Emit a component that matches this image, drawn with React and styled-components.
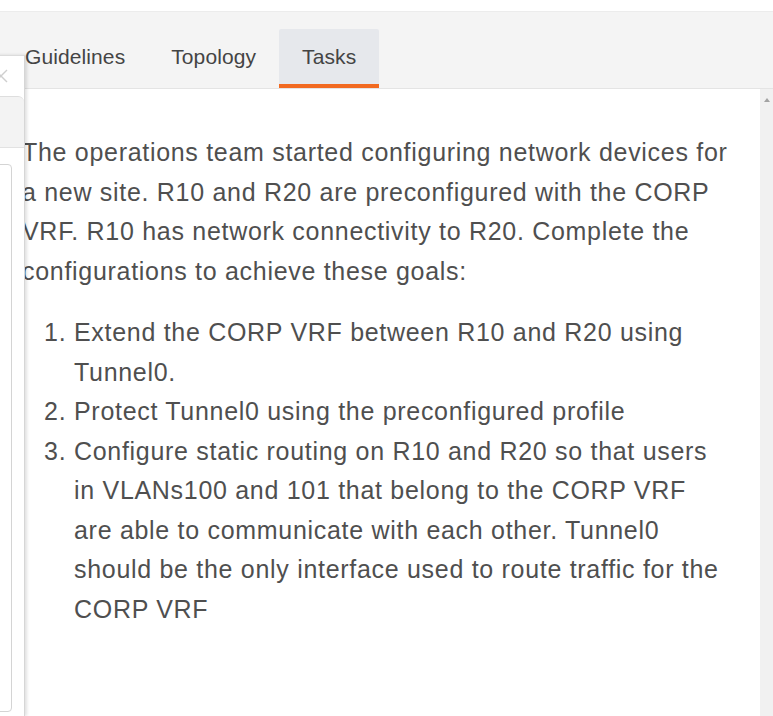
import styled, { createGlobalStyle } from "styled-components";

const GlobalStyle = createGlobalStyle`
  html, body {
    margin: 0;
    padding: 0;
    background: #ffffff;
    font-family: "Liberation Sans", Arial, sans-serif;
    overflow: hidden;
  }
`;

const Page = styled.div`
  position: relative;
  width: 773px;
  height: 716px;
  padding-top: 11px;
  box-sizing: border-box;
  display: flex;
  flex-direction: column;
  overflow: hidden;
`;

const TabBar = styled.div`
  display: flex;
  align-items: flex-end;
  height: 78px;
  box-sizing: border-box;
  padding-left: 2px;
  background: #f4f4f4;
  border-top: 1px solid #ececec;
  border-bottom: 1px solid #e4e4e4;
`;

const Tab = styled.div`
  display: flex;
  align-items: center;
  justify-content: center;
  height: 59px;
  padding: 0 23px;
  box-sizing: border-box;
  font-size: 21px;
  letter-spacing: 0.1px;
  color: #444;
  background: ${(p) => (p.active ? "#e6e8ec" : "transparent")};
  border-bottom: 4px solid ${(p) => (p.active ? "#f26a21" : "transparent")};
  border-top-left-radius: 2px;
  border-top-right-radius: 2px;
`;

const Body = styled.div`
  flex: 1;
  display: flex;
  min-height: 0;
`;

const Content = styled.div`
  flex: 1;
  padding: 44px 30px 0 22px;
  color: #4f4f4f;
  font-size: 25px;
  letter-spacing: 0.7px;
  line-height: 39.5px;
`;

const Paragraph = styled.p`
  margin: 0 0 22px;
`;

const List = styled.ol`
  margin: 0;
  padding-left: 52px;
`;

const Scrollbar = styled.div`
  width: 13px;
  background: #f1f1f1;
  display: flex;
  justify-content: center;
  padding-top: 9px;
  box-sizing: border-box;
`;

const ArrowUp = styled.div`
  width: 0;
  height: 0;
  border-left: 3px solid transparent;
  border-right: 3px solid transparent;
  border-bottom: 4px solid #a3a3a3;
`;

const Drawer = styled.div`
  position: absolute;
  top: 55px;
  left: -296px;
  width: 320px;
  bottom: 0;
  background: #fff;
  border-top: 1px solid #dcdcdc;
  border-right: 1px solid #d6d6d6;
  box-shadow: 2px 0 3px rgba(0, 0, 0, 0.12);
  display: flex;
  flex-direction: column;
`;

const DrawerHeader = styled.div`
  height: 40px;
  display: flex;
  align-items: center;
  justify-content: flex-end;
  padding-right: 16px;
`;

const DrawerSection = styled.div`
  height: 50px;
  background: #f3f3f3;
  border-top: 1px solid #dedede;
  border-bottom: 1px solid #e2e2e2;
  border-top-right-radius: 6px;
`;

const DrawerBox = styled.div`
  flex: 1;
  margin: 16px 12px 4px 0;
  border: 1px solid #d4d4d4;
  border-radius: 4px;
`;

const CloseIcon = () => (
  <svg width="14" height="14" viewBox="0 0 14 14">
    <path d="M1 1 L13 13 M13 1 L1 13" stroke="#cfcfcf" strokeWidth="1.4" fill="none" />
  </svg>
);

export default function App() {
  return (
    <>
      <GlobalStyle />
      <Page>
        <TabBar>
          <Tab>Guidelines</Tab>
          <Tab>Topology</Tab>
          <Tab active>Tasks</Tab>
        </TabBar>
        <Body>
          <Content>
            <Paragraph>
              The operations team started configuring network devices for a new site. R10 and R20 are
              preconfigured with the CORP VRF. R10 has network connectivity to R20. Complete the
              configurations to achieve these goals:
            </Paragraph>
            <List>
              <li>Extend the CORP VRF between R10 and R20 using Tunnel0.</li>
              <li>Protect Tunnel0 using the preconfigured profile</li>
              <li>
                Configure static routing on R10 and R20 so that users in VLANs100 and 101 that belong
                to the CORP VRF are able to communicate with each other. Tunnel0 should be the only
                interface used to route traffic for the CORP VRF
              </li>
            </List>
          </Content>
          <Scrollbar>
            <ArrowUp />
          </Scrollbar>
        </Body>
        <Drawer>
          <DrawerHeader>
            <CloseIcon />
          </DrawerHeader>
          <DrawerSection />
          <DrawerBox />
        </Drawer>
      </Page>
    </>
  );
}
